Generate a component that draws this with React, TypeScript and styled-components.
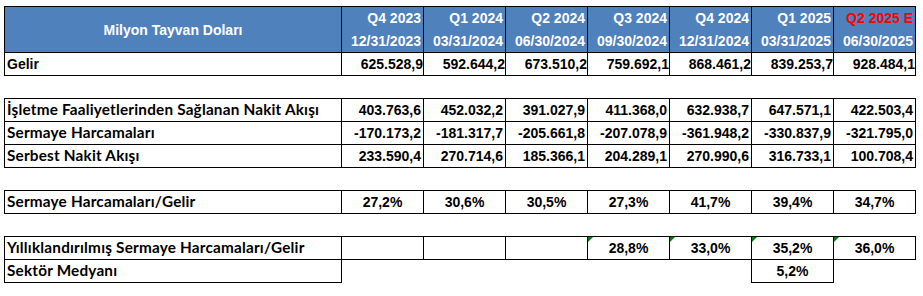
import styled, { createGlobalStyle } from 'styled-components'

type Align = 'left' | 'right' | 'center'

const GlobalStyle = createGlobalStyle`
  body {
    margin: 0;
    background: #ffffff;
  }
`

const Sheet = styled.table`
  margin: 6px 0 0 4px;
  border-collapse: collapse;
  table-layout: fixed;
  width: 912px;
  font-family: 'Liberation Sans', Arial, sans-serif;
  font-weight: bold;
  font-size: 14px;
  color: #000;
`

const Row = styled.tr`
  height: 23px;
`

const HeadCell = styled.th<{ $red?: boolean; $top?: boolean }>`
  background: #4f81bd;
  color: ${(p) => (p.$red ? '#ff0000' : '#ffffff')};
  font-weight: bold;
  text-align: right;
  vertical-align: middle;
  padding: 0 2px 0 0;
  line-height: 1;
  white-space: nowrap;
  border-left: 1px solid #000;
  border-right: 1px solid #000;
  border-top: ${(p) => (p.$top ? '1px solid #000' : 'none')};
  border-bottom: ${(p) => (p.$top ? 'none' : '1px solid #000')};
`

const TitleCell = styled.th`
  background: #4f81bd;
  color: #ffffff;
  font-weight: bold;
  text-align: center;
  vertical-align: middle;
  padding: 0;
  border: 1px solid #000;
`

const Label = styled.td<{ $calibri?: boolean }>`
  border: 1px solid #000;
  padding: 0 0 0 2px;
  line-height: 1;
  white-space: nowrap;
  font-family: ${(p) =>
    p.$calibri ? "Lato, 'Open Sans', sans-serif" : "'Liberation Sans', Arial, sans-serif"};
  font-size: ${(p) => (p.$calibri ? '15.3px' : '14px')};
  letter-spacing: ${(p) => (p.$calibri ? '0.2px' : '0')};
`

const Cell = styled.td<{ $align?: Align; $open?: boolean; $flag?: boolean }>`
  position: relative;
  border: ${(p) => (p.$open ? 'none' : '1px solid #000')};
  padding: ${(p) => (p.$align === 'right' ? '0 2px 0 0' : '0')};
  text-align: ${(p) => p.$align ?? 'right'};
  line-height: 1;
  white-space: nowrap;

  &::before {
    content: '';
    display: ${(p) => (p.$flag ? 'block' : 'none')};
    position: absolute;
    left: 0;
    top: 0;
    width: 0;
    height: 0;
    border-top: 5px solid #008000;
    border-right: 5px solid transparent;
  }
`

const Gap = styled.td`
  padding: 0;
  border: none;
`

const quarters = [
  { q: 'Q4 2023', d: '12/31/2023' },
  { q: 'Q1 2024', d: '03/31/2024' },
  { q: 'Q2 2024', d: '06/30/2024' },
  { q: 'Q3 2024', d: '09/30/2024' },
  { q: 'Q4 2024', d: '12/31/2024' },
  { q: 'Q1 2025', d: '03/31/2025' },
  { q: 'Q2 2025 E', d: '06/30/2025', estimate: true },
]

const revenue = ['625.528,9', '592.644,2', '673.510,2', '759.692,1', '868.461,2', '839.253,7', '928.484,1']

const cashRows = [
  {
    label: 'İşletme Faaliyetlerinden Sağlanan Nakit Akışı',
    values: ['403.763,6', '452.032,2', '391.027,9', '411.368,0', '632.938,7', '647.571,1', '422.503,4'],
  },
  {
    label: 'Sermaye Harcamaları',
    values: ['-170.173,2', '-181.317,7', '-205.661,8', '-207.078,9', '-361.948,2', '-330.837,9', '-321.795,0'],
  },
  {
    label: 'Serbest Nakit Akışı',
    values: ['233.590,4', '270.714,6', '185.366,1', '204.289,1', '270.990,6', '316.733,1', '100.708,4'],
  },
]

const capexRatio = ['27,2%', '30,6%', '30,5%', '27,3%', '41,7%', '39,4%', '34,7%']
const annualized = ['', '', '', '28,8%', '33,0%', '35,2%', '36,0%']
const sectorMedian = ['', '', '', '', '', '5,2%', '']

const SpacerRow = () => (
  <Row>
    <Gap colSpan={8} />
  </Row>
)

export default function App() {
  return (
    <>
      <GlobalStyle />
      <Sheet>
        <colgroup>
          <col style={{ width: 337 }} />
          {quarters.map((q) => (
            <col key={q.q} style={{ width: 82 }} />
          ))}
        </colgroup>
        <thead>
          <Row>
            <TitleCell rowSpan={2}>Milyon Tayvan Doları</TitleCell>
            {quarters.map((q) => (
              <HeadCell key={q.q} $top $red={q.estimate}>
                {q.q}
              </HeadCell>
            ))}
          </Row>
          <Row>
            {quarters.map((q) => (
              <HeadCell key={q.d}>{q.d}</HeadCell>
            ))}
          </Row>
        </thead>
        <tbody>
          <Row>
            <Label>Gelir</Label>
            {revenue.map((v, i) => (
              <Cell key={i}>{v}</Cell>
            ))}
          </Row>
          <SpacerRow />
          {cashRows.map((r) => (
            <Row key={r.label}>
              <Label $calibri>{r.label}</Label>
              {r.values.map((v, i) => (
                <Cell key={i} $align="right">
                  {v}
                </Cell>
              ))}
            </Row>
          ))}
          <SpacerRow />
          <Row>
            <Label $calibri>Sermaye Harcamaları/Gelir</Label>
            {capexRatio.map((v, i) => (
              <Cell key={i} $align="center">
                {v}
              </Cell>
            ))}
          </Row>
          <SpacerRow />
          <Row>
            <Label $calibri>Yıllıklandırılmış Sermaye Harcamaları/Gelir</Label>
            {annualized.map((v, i) => (
              <Cell key={i} $align="center" $flag={v !== ''}>
                {v}
              </Cell>
            ))}
          </Row>
          <Row>
            <Label $calibri>Sektör Medyanı</Label>
            {sectorMedian.map((v, i) => (
              <Cell key={i} $align="center" $open={v === ''}>
                {v}
              </Cell>
            ))}
          </Row>
        </tbody>
      </Sheet>
    </>
  )
}
